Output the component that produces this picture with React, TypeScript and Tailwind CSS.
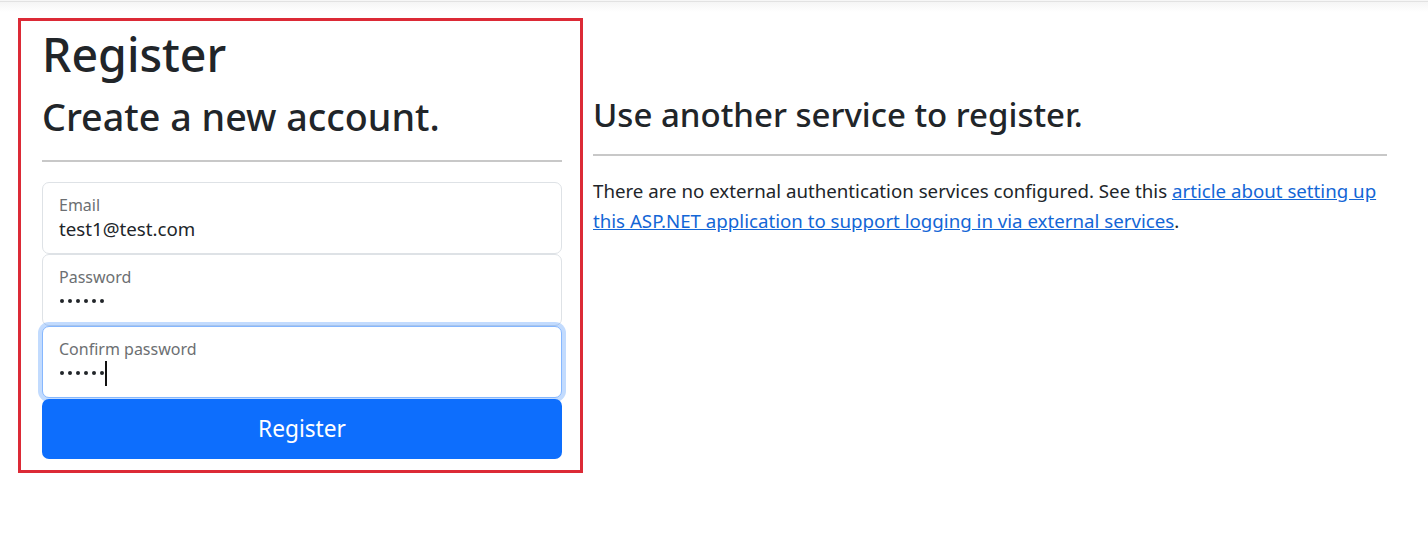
import React from 'react'

const font = { fontFamily: '"Noto Sans", "Open Sans", "Liberation Sans", sans-serif' }

function Dots({ caret }: { caret?: boolean }) {
  return (
    <div className="flex items-center h-[24px] mt-[2px] ml-[1px]">
      <div className="flex gap-[4px]">
        {[0, 1, 2, 3, 4, 5].map((i) => (
          <span key={i} className="block w-[4px] h-[4px] rounded-full bg-[#212529]" />
        ))}
      </div>
      {caret && <span className="block w-[2px] h-[25px] bg-[#111] ml-[1px]" />}
    </div>
  )
}

function Field({
  label,
  value,
  password,
  focused,
}: {
  label: string
  value?: string
  password?: boolean
  focused?: boolean
}) {
  return (
    <div
      className={
        focused
          ? 'h-[72px] rounded-[7px] border border-[#86b7fe] bg-white px-[16px] pt-[12px] shadow-[0_0_0_4px_rgba(13,110,253,0.25)]'
          : 'h-[72px] rounded-[7px] border border-[#dee2e6] bg-white px-[16px] pt-[12px]'
      }
    >
      <label className="block text-[16px] leading-[20px] text-[#6c6f72]">{label}</label>
      {password ? (
        <Dots caret={focused} />
      ) : (
        <div className="mt-[2px] text-[18.7px] leading-[24px] text-[#212529]">{value}</div>
      )}
    </div>
  )
}

export default function App() {
  return (
    <div className="min-h-screen bg-white text-[#212529]" style={font}>
      {/* navbar shadow remnant */}
      <div className="h-px bg-[#f6f6f6]" />
      <div className="h-px bg-[#e2e2e2]" />
      <div className="h-[10px] bg-linear-to-b from-[#f5f5f5] to-white" />

      <div className="flex items-start pl-[18px] pt-[6px]">
        {/* Register form */}
        <div className="w-[565px] border-[3px] border-[#dc2a36] pl-[21px] pr-[18px] pb-[11px]">
          <h1 className="text-[46.5px] leading-[66px] font-medium">Register</h1>
          <h2 className="mt-[6px] text-[37.7px] leading-[48px] font-medium">Create a new account.</h2>
          <hr className="mt-[19px] mb-[20px] h-[2px] border-0 bg-[#c8c8c8]" />
          <form onSubmit={(e) => e.preventDefault()}>
            <Field label="Email" value="test1@test.com" />
            <Field label="Password" password />
            <Field label="Confirm password" password focused />
            <button
              type="submit"
              className="mt-px flex h-[60px] w-full items-center justify-center rounded-[7px] bg-[#0d6efd] text-[22.7px] text-white"
            >
              Register
            </button>
          </form>
        </div>

        {/* External logins */}
        <div className="ml-[10px] w-[794px] pt-[76px]">
          <h3 className="text-[33px] leading-[42px] font-medium">Use another service to register.</h3>
          <hr className="mt-[18px] mb-[20px] h-[2px] border-0 bg-[#c8c8c8]" />
          <p className="text-[18.7px] leading-[30px]">
            There are no external authentication services configured. See this{' '}
            <a href="#" className="text-[#1366d6] underline">
              article about setting up this ASP.NET application to support logging in via external services
            </a>
            .
          </p>
        </div>
      </div>
    </div>
  )
}
